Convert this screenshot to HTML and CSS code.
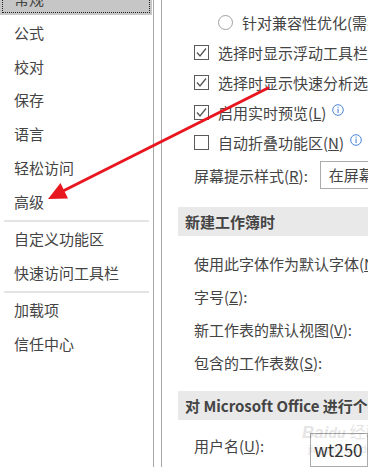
FILE: index.html
```html
<!DOCTYPE html>
<html lang="zh-CN">
<head>
    <meta charset="UTF-8">
    <title>Excel 选项</title>
    <link rel="stylesheet" href="styles.css">
</head>
<body>
<div class="window">
    <ul class="nav">
        <li class="nav-item selected">常规</li>
        <li class="nav-item">公式</li>
        <li class="nav-item">校对</li>
        <li class="nav-item">保存</li>
        <li class="nav-item">语言</li>
        <li class="nav-item">轻松访问</li>
        <li class="nav-item">高级</li>
        <li class="nav-sep"></li>
        <li class="nav-item">自定义功能区</li>
        <li class="nav-item">快速访问工具栏</li>
        <li class="nav-sep"></li>
        <li class="nav-item">加载项</li>
        <li class="nav-item">信任中心</li>
    </ul>

    <div class="pane">
        <div class="row radio-row">
            <span class="radio"></span>
            <span>针对兼容性优化(需要重启应用)</span>
        </div>
        <div class="row">
            <span class="check on"><svg width="13" height="13" viewBox="0 0 13 13"><polyline points="2,6.5 5,10 11,2.5" fill="none" stroke="#555" stroke-width="1.3"/></svg></span>
            <span>选择时显示浮动工具栏(M)</span>
        </div>
        <div class="row">
            <span class="check on"><svg width="13" height="13" viewBox="0 0 13 13"><polyline points="2,6.5 5,10 11,2.5" fill="none" stroke="#555" stroke-width="1.3"/></svg></span>
            <span>选择时显示快速分析选项(Q)</span>
        </div>
        <div class="row">
            <span class="check on"><svg width="13" height="13" viewBox="0 0 13 13"><polyline points="2,6.5 5,10 11,2.5" fill="none" stroke="#555" stroke-width="1.3"/></svg></span>
            <span>启用实时预览(<u>L</u>)</span>
            <svg class="info" width="12" height="12" viewBox="0 0 12 12"><circle cx="6" cy="6" r="5.3" fill="none" stroke="#4a86d8" stroke-width="1"/><rect x="5.5" y="2.6" width="1.1" height="1.1" fill="#4a86d8"/><rect x="5.5" y="4.7" width="1.1" height="4.4" fill="#4a86d8"/></svg>
        </div>
        <div class="row">
            <span class="check"></span>
            <span>自动折叠功能区(<u>N</u>)</span>
            <svg class="info" width="12" height="12" viewBox="0 0 12 12"><circle cx="6" cy="6" r="5.3" fill="none" stroke="#4a86d8" stroke-width="1"/><rect x="5.5" y="2.6" width="1.1" height="1.1" fill="#4a86d8"/><rect x="5.5" y="4.7" width="1.1" height="4.4" fill="#4a86d8"/></svg>
        </div>
        <div class="row tip-row">
            <span class="label">屏幕提示样式(<u>R</u>):</span>
            <span class="select">在屏幕提示中显示功能说明</span>
        </div>

        <div class="section">新建工作簿时</div>
        <div class="row field">使用此字体作为默认字体(<u>N</u>):</div>
        <div class="row field">字号(<u>Z</u>):</div>
        <div class="row field">新工作表的默认视图(<u>V</u>):</div>
        <div class="row field">包含的工作表数(<u>S</u>):</div>

        <div class="section">对 Microsoft Office 进行个性化设置</div>
        <div class="row field user-row">
            <span class="label">用户名(<u>U</u>):</span>
            <span class="textbox">wt250</span>
        </div>
    </div>
</div>

<div class="watermark">
    <span class="wm-logo">Bai<span class="wm-du">du</span></span><span class="wm-cn">经验</span>
    <div class="wm-url">jingyan.baidu.com</div>
</div>

<svg class="arrow" width="368" height="467" viewBox="0 0 368 467">
    <line x1="268" y1="88" x2="63" y2="191" stroke="#e8161f" stroke-width="3" stroke-linecap="round"/>
    <polygon points="48,199 60.5,183 68,198.5" fill="#e8161f"/>
</svg>
</body>
</html>
```

FILE: styles.css
```css
html, body {
    margin: 0;
    padding: 0;
    background: #fff;
}
body {
    width: 368px;
    height: 467px;
    overflow: hidden;
    position: relative;
    font-family: "Noto Sans CJK SC", "Noto Sans", sans-serif;
    font-size: 15px;
    color: #444;
}
.window {
    display: flex;
    height: 467px;
    overflow: hidden;
}
.nav {
    list-style: none;
    margin: -17px 0 0 0;
    padding: 0;
    width: 153px;
    flex-shrink: 0;
    border-right: 1px solid #a8a8a8;
}
.nav-item {
    height: 32px;
    line-height: 32px;
    margin-bottom: 1.8px;
    padding-left: 14px;
    white-space: nowrap;
}
.nav-item.selected {
    background-color: #c6c6c6;
    outline: 1px dotted #222;
    outline-offset: -3px;
    margin-right: 1px;
}
.nav-sep {
    height: 2px;
    margin: 0 4px 1.5px 4px;
    background-color: #e4e4e4;
}
.pane {
    flex: 1;
    margin-left: 7px;
    border-left: 1px solid #a8a8a8;
    padding: 7px 0 0 16px;
    overflow: hidden;
    white-space: nowrap;
}
.row {
    display: flex;
    align-items: center;
    height: 30px;
    padding-left: 16px;
}
.radio-row {
    padding-left: 40px;
}
.radio {
    width: 13px;
    height: 13px;
    border: 1px solid #a0a0a0;
    border-radius: 50%;
    margin-right: 9px;
    flex-shrink: 0;
}
.check {
    width: 13px;
    height: 13px;
    border: 1px solid #5a5a5a;
    margin-right: 9px;
    flex-shrink: 0;
    display: flex;
}
.info {
    margin-left: 6px;
    margin-top: -5px;
    flex-shrink: 0;
}
.tip-row {
    height: 34px;
    margin-top: 1px;
}
.tip-row .label {
    margin-right: 12px;
}
.select {
    height: 26px;
    line-height: 26px;
    border: 1px solid #ababab;
    padding-left: 8px;
}
.section {
    margin-top: 15px;
    height: 29px;
    line-height: 29px;
    background-color: #e9e9e9;
    padding-left: 7px;
    font-weight: bold;
    white-space: nowrap;
}
.field {
    height: 33px;
}
.field + .section {
    margin-top: 12px;
}
.section + .field {
    margin-top: 11px;
}
.section + .user-row {
    margin-top: 8px;
    height: 34px;
}
.user-row .label {
    margin-right: 46px;
}
.textbox {
    height: 32px;
    line-height: 32px;
    margin-top: 10px;
    border: 1px solid #ababab;
    padding-left: 3px;
    width: 80px;
    font-size: 17px;
    color: #333;
}
.watermark {
    position: absolute;
    left: 302px;
    top: 419px;
    color: #000;
    opacity: 0.1;
    font-family: "Liberation Sans", sans-serif;
    white-space: nowrap;
}
.wm-logo {
    font-size: 17px;
    font-weight: bold;
    font-style: italic;
}
.wm-du {
    font-size: 14px;
}
.wm-cn {
    font-family: "Noto Sans CJK SC", sans-serif;
    font-size: 16px;
    margin-left: 4px;
}
.wm-url {
    font-size: 11px;
    margin-left: 6px;
}
.arrow {
    position: absolute;
    left: 0;
    top: 0;
    pointer-events: none;
}
```
